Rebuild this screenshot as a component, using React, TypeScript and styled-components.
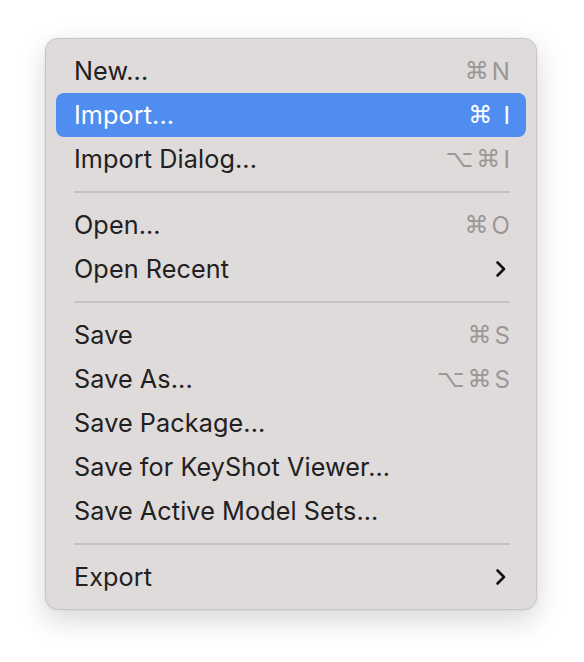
import React from "react";
import styled, { createGlobalStyle } from "styled-components";

const GlobalStyle = createGlobalStyle`
  html, body {
    margin: 0;
    padding: 0;
    background: #ffffff;
  }
  body {
    font-family: Inter, "Noto Sans", "DejaVu Sans", sans-serif;
  }
`;

const Page = styled.div`
  width: 584px;
  height: 662px;
  padding: 38px 0 0 45px;
  box-sizing: border-box;
`;

const Menu = styled.div`
  width: 492px;
  box-sizing: border-box;
  padding: 10px 10px;
  background: #dfdbda;
  border-radius: 13px;
  border: 1px solid #c9c5c4;
  box-shadow: 0 10px 28px rgba(0, 0, 0, 0.16), 0 0 3px rgba(0, 0, 0, 0.08);
  display: flex;
  flex-direction: column;
`;

const Item = styled.div<{ $active?: boolean }>`
  height: 44px;
  display: flex;
  align-items: center;
  justify-content: space-between;
  padding: 0 16px 0 18px;
  border-radius: 8px;
  background: ${(p) => (p.$active ? "#4f8ef0" : "transparent")};
  color: ${(p) => (p.$active ? "#ffffff" : "#222020")};
  font-size: 25.2px;
  letter-spacing: 0.1px;
`;

const Shortcut = styled.span<{ $active?: boolean }>`
  color: ${(p) => (p.$active ? "#ffffff" : "#9b9797")};
  font-size: 24px;
  display: flex;
  align-items: center;
  gap: ${(p) => (p.$active ? "11px" : "3px")};
`;

const Sym = styled.span`
  font-family: "DejaVu Sans", sans-serif;
  font-size: 24px;
`;

const Separator = styled.div`
  height: 2px;
  background: #c6c1c0;
  margin: 10px 16px 10px 18px;
`;

const Chevron = () => (
  <svg width="12" height="18" viewBox="0 0 12 18" style={{ marginRight: 3 }}>
    <path d="M2.5 2.5 L9 9 L2.5 15.5" fill="none" stroke="#111" strokeWidth="2.6" strokeLinecap="round" strokeLinejoin="round" />
  </svg>
);

type Entry =
  | { kind: "item"; label: string; keys?: string[]; sub?: boolean; active?: boolean }
  | { kind: "sep" };

const entries: Entry[] = [
  { kind: "item", label: "New...", keys: ["⌘", "N"] },
  { kind: "item", label: "Import...", keys: ["⌘", "I"], active: true },
  { kind: "item", label: "Import Dialog...", keys: ["⌥", "⌘", "I"] },
  { kind: "sep" },
  { kind: "item", label: "Open...", keys: ["⌘", "O"] },
  { kind: "item", label: "Open Recent", sub: true },
  { kind: "sep" },
  { kind: "item", label: "Save", keys: ["⌘", "S"] },
  { kind: "item", label: "Save As...", keys: ["⌥", "⌘", "S"] },
  { kind: "item", label: "Save Package..." },
  { kind: "item", label: "Save for KeyShot Viewer..." },
  { kind: "item", label: "Save Active Model Sets..." },
  { kind: "sep" },
  { kind: "item", label: "Export", sub: true },
];

export default function App() {
  return (
    <>
      <GlobalStyle />
      <Page>
        <Menu>
          {entries.map((e, i) =>
            e.kind === "sep" ? (
              <Separator key={i} />
            ) : (
              <Item key={i} $active={e.active}>
                <span>{e.label}</span>
                {e.keys && (
                  <Shortcut $active={e.active}>
                    {e.keys.map((k, j) =>
                      k === "⌘" || k === "⌥" ? <Sym key={j}>{k}</Sym> : <span key={j}>{k}</span>
                    )}
                  </Shortcut>
                )}
                {e.sub && <Chevron />}
              </Item>
            )
          )}
        </Menu>
      </Page>
    </>
  );
}
